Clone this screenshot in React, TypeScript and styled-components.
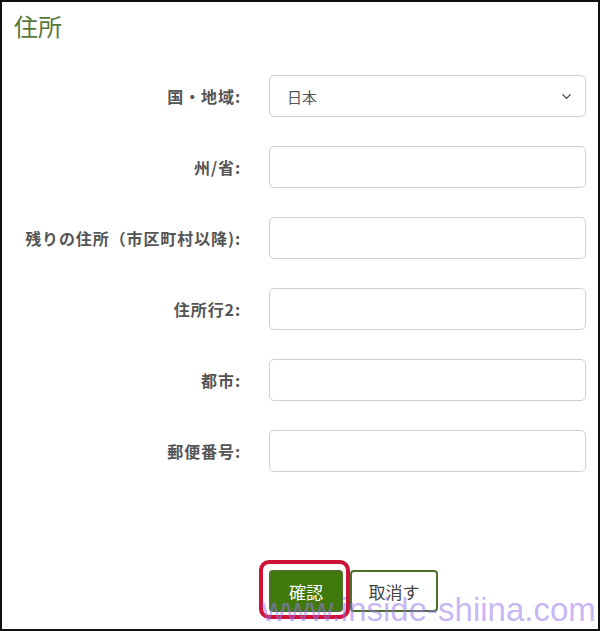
import React from "react";
import styled, { createGlobalStyle } from "styled-components";
import { ChevronDown } from "lucide-react";

// ─── Global ───────────────────────────────────────────────────────────────────

const GlobalStyle = createGlobalStyle`
  html, body {
    margin: 0;
    padding: 0;
    background: #fff;
  }
  * { box-sizing: border-box; }
`;

// ─── Styled components ────────────────────────────────────────────────────────

const Frame = styled.div`
  position: relative;
  width: 600px;
  height: 631px;
  border: 2px solid #111;
  background: #fff;
  font-family: "Noto Sans CJK JP", "Noto Sans", sans-serif;
  padding: 9px 0 0 12px;
  overflow: hidden;
`;

const Title = styled.h1`
  margin: 0 0 34px;
  font-size: 24px;
  line-height: 30px;
  font-weight: 400;
  color: #55783a;
`;

const Form = styled.div`
  display: flex;
  flex-direction: column;
  gap: 29px;
`;

const Row = styled.div`
  display: grid;
  grid-template-columns: 227px 317px;
  column-gap: 28px;
  align-items: center;
`;

const Label = styled.label`
  text-align: right;
  font-size: 16px;
  font-weight: 700;
  letter-spacing: 0.9px;
  color: #555;
  white-space: nowrap;
`;

const Input = styled.input`
  height: 42px;
  width: 100%;
  border: 1px solid #cfcfcf;
  border-radius: 5px;
  padding: 0 16px;
  font-family: inherit;
  font-size: 15px;
  color: #555;
  outline: none;
`;

const SelectBox = styled.div`
  height: 42px;
  border: 1px solid #cfcfcf;
  border-radius: 5px;
  padding: 0 11px 0 17px;
  display: flex;
  align-items: center;
  justify-content: space-between;
  font-size: 15px;
  color: #555;
  svg { color: #444; }
`;

const Actions = styled.div`
  display: flex;
  gap: 7px;
  margin: 98px 0 0 255px;
`;

const Highlight = styled.div`
  position: relative;
  &::after {
    content: "";
    position: absolute;
    inset: -10px -7px -7px -10px;
    border: 4px solid #cc1236;
    border-radius: 10px;
    pointer-events: none;
  }
`;

const Button = styled.button<{ $primary?: boolean }>`
  height: 42px;
  padding: 0;
  width: ${({ $primary }) => ($primary ? "74px" : "88px")};
  border-radius: 4px;
  border: 2px solid #4c6f2a;
  background: ${({ $primary }) => ($primary ? "#41790c" : "#fff")};
  color: ${({ $primary }) => ($primary ? "#fff" : "#444")};
  font-family: inherit;
  font-size: 17px;
  cursor: pointer;
`;

const Watermark = styled.div`
  position: absolute;
  left: 260px;
  top: 591px;
  font-family: "Liberation Sans", Arial, sans-serif;
  font-size: 33px;
  line-height: 1;
  color: rgba(150, 120, 235, 0.55);
  white-space: nowrap;
  pointer-events: none;
`;

// ─── Component ────────────────────────────────────────────────────────────────

const fields = ["州/省:", "残りの住所（市区町村以降):", "住所行2:", "都市:", "郵便番号:"];

export default function App() {
  return (
    <>
      <GlobalStyle />
      <Frame>
        <Title>住所</Title>
        <Form>
          <Row>
            <Label>国・地域:</Label>
            <SelectBox>
              日本
              <ChevronDown size={15} strokeWidth={2} />
            </SelectBox>
          </Row>
          {fields.map((f) => (
            <Row key={f}>
              <Label>{f}</Label>
              <Input />
            </Row>
          ))}
        </Form>
        <Actions>
          <Highlight>
            <Button $primary>確認</Button>
          </Highlight>
          <Button>取消す</Button>
        </Actions>
        <Watermark>www.inside-shiina.com</Watermark>
      </Frame>
    </>
  );
}
